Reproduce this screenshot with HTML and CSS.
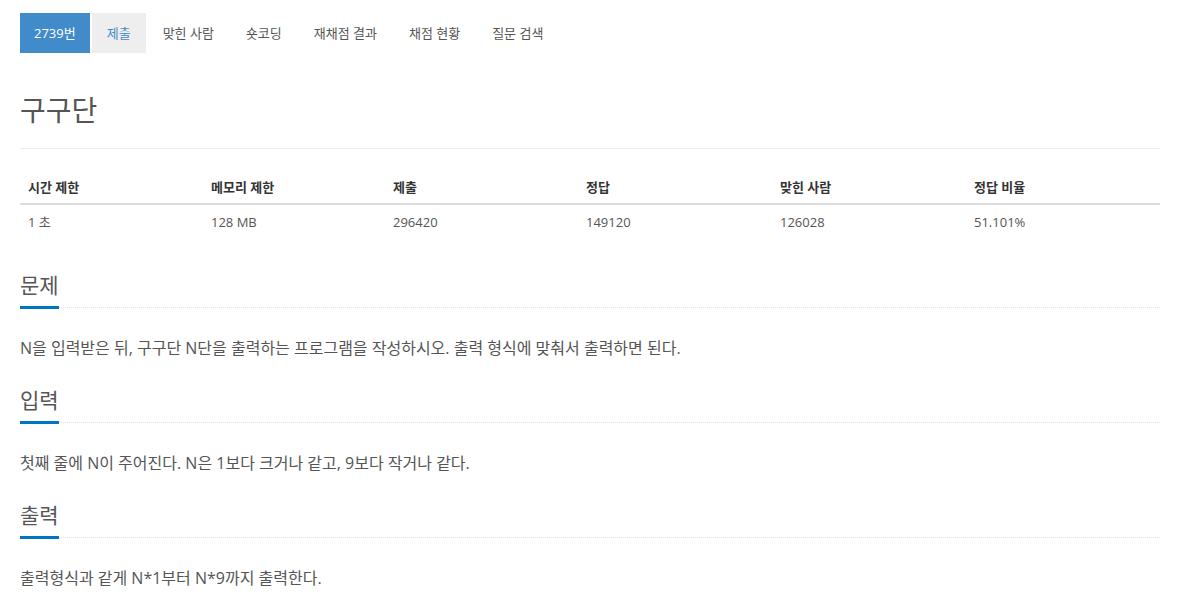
FILE: index.html
```html
<!DOCTYPE html>
<html lang="ko">
<head>
<meta charset="utf-8">
<title>2739번: 구구단</title>
<link rel="stylesheet" href="styles.css">
</head>
<body>
<div class="container">
  <ul class="nav-pills">
    <li class="active"><a href="#">2739번</a></li>
    <li class="sub"><a href="#">제출</a></li>
    <li><a href="#">맞힌 사람</a></li>
    <li><a href="#">숏코딩</a></li>
    <li><a href="#">재채점 결과</a></li>
    <li><a href="#">채점 현황</a></li>
    <li><a href="#">질문 검색</a></li>
  </ul>

  <div class="page-header">
    <h1>구구단</h1>
  </div>

  <table class="info">
    <colgroup>
      <col class="c1"><col class="c2"><col class="c3"><col class="c4"><col class="c5"><col class="c6">
    </colgroup>
    <thead>
      <tr><th>시간 제한</th><th>메모리 제한</th><th>제출</th><th>정답</th><th>맞힌 사람</th><th>정답 비율</th></tr>
    </thead>
    <tbody>
      <tr><td>1 초</td><td>128 MB</td><td>296420</td><td>149120</td><td>126028</td><td>51.101%</td></tr>
    </tbody>
  </table>

  <section class="problem-section">
    <div class="headline"><h2><span>문제</span></h2></div>
    <p>N을 입력받은 뒤, 구구단 N단을 출력하는 프로그램을 작성하시오. 출력 형식에 맞춰서 출력하면 된다.</p>
  </section>

  <section class="problem-section">
    <div class="headline"><h2><span>입력</span></h2></div>
    <p>첫째 줄에 N이 주어진다. N은 1보다 크거나 같고, 9보다 작거나 같다.</p>
  </section>

  <section class="problem-section">
    <div class="headline"><h2><span>출력</span></h2></div>
    <p>출력형식과 같게 N*1부터 N*9까지 출력한다.</p>
  </section>
</div>
</body>
</html>
```

FILE: styles.css
```css
* { box-sizing: border-box; }

html, body {
  margin: 0;
  padding: 0;
  background: #fff;
}

body {
  font-family: "Open Sans", "Noto Sans CJK KR", sans-serif;
  font-size: 13px;
  line-height: 20px;
  color: #555;
}

.container {
  width: 1140px;
  margin-left: 20px;
}

.nav-pills {
  list-style: none;
  margin: 13px 0 0;
  padding: 0;
  display: flex;
  gap: 2px;
}

.nav-pills li a {
  display: block;
  padding: 10px 15px;
  line-height: 20px;
  color: #555;
  text-decoration: none;
}

.nav-pills li.active a {
  background: #428bca;
  color: #fff;
  padding: 10px 14px;
}

.nav-pills li.sub a {
  background: #eee;
  color: #428bca;
}

.page-header {
  margin-top: 42px;
  padding-bottom: 22px;
  border-bottom: 1px solid #eee;
}

.page-header h1 {
  margin: 0;
  font-size: 28px;
  line-height: 31px;
  font-weight: 400;
  color: #555;
}

.info {
  width: 1140px;
  margin-top: 21px;
  margin-bottom: 31px;
  border-collapse: collapse;
  table-layout: fixed;
}

.info .c1 { width: 183px; }
.info .c2 { width: 182px; }
.info .c3 { width: 193px; }
.info .c4 { width: 194px; }
.info .c5 { width: 194px; }
.info .c6 { width: 194px; }

.info th, .info td {
  text-align: left;
  padding: 8px;
  line-height: 18px;
  font-size: 13px;
}

.info th {
  padding-bottom: 7px;
  font-weight: 700;
  color: #333;
  border-bottom: 2px solid #ddd;
}

.info td {
  color: #555;
}

.problem-section {
  margin-bottom: 25px;
}

.headline {
  margin-bottom: 28px;
}

.headline h2 {
  margin: 0;
  font-size: 21px;
  font-weight: 400;
  color: #555;
  border-bottom: 1px dotted #e4e4e4;
  line-height: 0;
}

.headline h2 span {
  display: inline-block;
  line-height: 30px;
  padding-bottom: 6px;
  border-bottom: 3px solid #0076c0;
  margin-bottom: -2px;
}

.problem-section p {
  margin: 0;
  font-size: 16px;
  line-height: 24px;
  color: #555;
}
```
